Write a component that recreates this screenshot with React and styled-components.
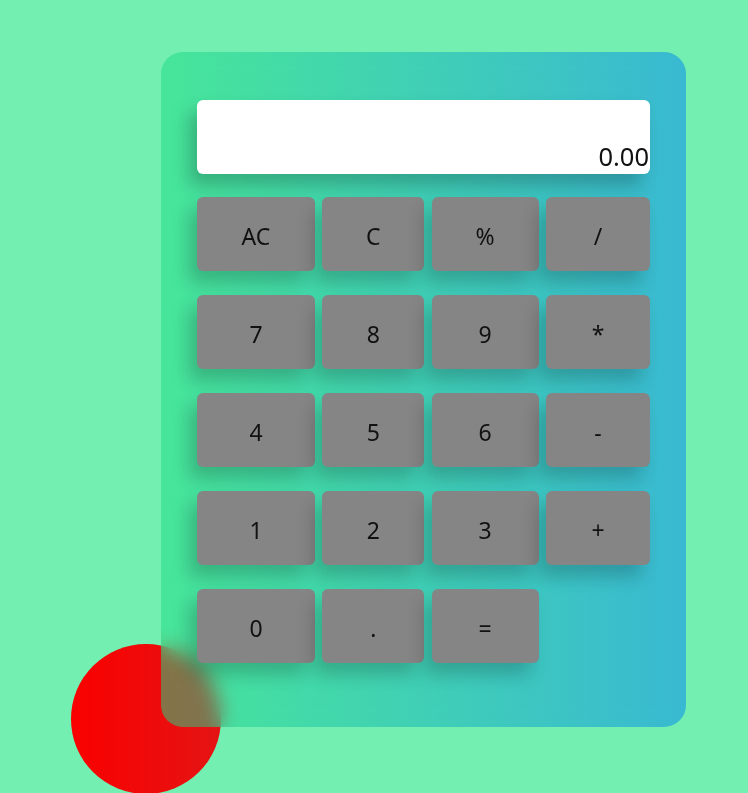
import React from "react";
import styled, {createGlobalStyle} from "styled-components";

const GlobalStyle = createGlobalStyle`
  html, body {
    margin: 0;
    padding: 0;
    background: #72efb1;
    font-family: "Noto Sans", "Open Sans", sans-serif;
  }
  body {
    min-height: 793px;
    overflow: hidden;
  }
`;

const Page = styled.main`
  position: relative;
  min-height: 793px;
  padding: 52px 0 0 161px;
  box-sizing: border-box;
`;

const Blob = styled.div`
  position: absolute;
  left: 71px;
  top: 644px;
  width: 150px;
  height: 150px;
  border-radius: 50%;
  background: linear-gradient(to right, #fa0000, #e41414);
`;

const Calculator = styled.section`
  position: relative;
  width: 525px;
  height: 675px;
  box-sizing: border-box;
  padding: 48px 36px 0;
  border-radius: 22px;
  background: linear-gradient(
    to right,
    rgba(28, 220, 130, 0.5),
    rgba(0, 131, 242, 0.5)
  );
  backdrop-filter: blur(10px);
  display: flex;
  flex-direction: column;
  gap: 23px;
`;

const Display = styled.div`
  height: 74px;
  background: #fff;
  border-radius: 6px;
  box-shadow: -8px 12px 18px rgba(0, 0, 0, 0.22);
  display: flex;
  align-items: flex-end;
  justify-content: flex-end;
  font-size: 25.5px;
  line-height: 1;
  padding: 0 1px 5px 0;
  box-sizing: border-box;
  color: #111;
`;

const Keys = styled.div`
  display: grid;
  grid-template-columns: 118px 102px 107px 104px;
  grid-auto-rows: 74px;
  column-gap: 7.33px;
  row-gap: 24px;
`;

const Key = styled.button`
  border: none;
  border-radius: 6px;
  background: #858585;
  color: #111;
  font-family: inherit;
  font-size: 23px;
  padding: 3px 0 0;
  box-shadow: -8px 12px 18px rgba(0, 0, 0, 0.2);
  cursor: pointer;
`;

const keys = [
  "AC", "C", "%", "/",
  "7", "8", "9", "*",
  "4", "5", "6", "-",
  "1", "2", "3", "+",
  "0", ".", "=",
];

const App = () => {
  return (
    <>
      <GlobalStyle />
      <Page>
        <Blob />
        <Calculator>
          <Display>0.00</Display>
          <Keys>
            {keys.map((k) => (
              <Key key={k}>{k}</Key>
            ))}
          </Keys>
        </Calculator>
      </Page>
    </>
  );
};

export default App;
